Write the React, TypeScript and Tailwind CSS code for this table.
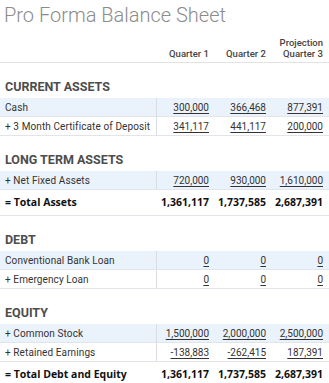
import type { ReactNode } from "react";

type Line = {
  label: string;
  values: string[];
};

type Section = {
  title: string;
  lines: Line[];
  total?: { label: string; values: string[] };
};

const sections: Section[] = [
  {
    title: "CURRENT ASSETS",
    lines: [
      { label: "Cash", values: ["300,000", "366,468", "877,391"] },
      { label: "+ 3 Month Certificate of Deposit", values: ["341,117", "441,117", "200,000"] },
    ],
  },
  {
    title: "LONG TERM ASSETS",
    lines: [{ label: "+ Net Fixed Assets", values: ["720,000", "930,000", "1,610,000"] }],
    total: { label: "= Total Assets", values: ["1,361,117", "1,737,585", "2,687,391"] },
  },
  {
    title: "DEBT",
    lines: [
      { label: "Conventional Bank Loan", values: ["0", "0", "0"] },
      { label: "+ Emergency Loan", values: ["0", "0", "0"] },
    ],
  },
  {
    title: "EQUITY",
    lines: [
      { label: "+ Common Stock", values: ["1,500,000", "2,000,000", "2,500,000"] },
      { label: "+ Retained Earnings", values: ["-138,883", "-262,415", "187,391"] },
    ],
    total: { label: "= Total Debt and Equity", values: ["1,361,117", "1,737,585", "2,687,391"] },
  },
];

function Cell({ children }: { children: ReactNode }) {
  return <div className="w-[57px] shrink-0 pr-[5px] text-right">{children}</div>;
}

export default function App() {
  return (
    <div
      className="h-[383px] w-[329px] overflow-hidden bg-white text-[#333]"
      style={{ fontFamily: "Roboto, 'Liberation Sans', sans-serif" }}
    >
      <h1 className="pl-[4px] pt-[2px] text-[20px] font-light leading-[27px] text-[#8c8c8c]">
        Pro Forma Balance Sheet
      </h1>

      <div className="flex h-[34px] items-end border-b border-[#e2e2e2] pb-[3px] text-[9.5px] font-medium leading-[11px] text-[#444]">
        <div className="w-[157px] shrink-0" />
        <Cell>Quarter 1</Cell>
        <Cell>Quarter 2</Cell>
        <Cell>
          Projection
          <br />
          Quarter 3
        </Cell>
      </div>

      {sections.map((section) => (
        <div key={section.title}>
          <div className="flex h-[35px] items-end pb-[4px] pl-[5px] text-[12.5px] font-bold leading-[14px] text-[#4d4d4d]">
            {section.title}
          </div>
          {section.lines.map((line, i) => (
            <div
              key={line.label}
              className={`flex h-[19px] items-center border-b border-[#e1e5ea] text-[10px] ${
                i === 0 ? "bg-[#eaf2fb]" : "bg-white"
              }`}
            >
              <div className="flex h-full w-[157px] shrink-0 items-center border-r border-[#d9dde2] pl-[5px] tracking-[0.1px]">
                {line.label}
              </div>
              {line.values.map((v, j) => (
                <Cell key={j}>
                  <span className="underline underline-offset-[2px]">{v}</span>
                </Cell>
              ))}
            </div>
          ))}
          {section.total && (
            <div
              className="flex h-[26px] items-center border-b border-[#e1e5ea] text-[10.5px] font-bold text-[#111]"
              style={{ fontFamily: "'Open Sans', 'Liberation Sans', sans-serif" }}
            >
              <div className="w-[157px] shrink-0 pl-[5px]">{section.total.label}</div>
              {section.total.values.map((v, j) => (
                <Cell key={j}>{v}</Cell>
              ))}
            </div>
          )}
        </div>
      ))}
    </div>
  );
}
